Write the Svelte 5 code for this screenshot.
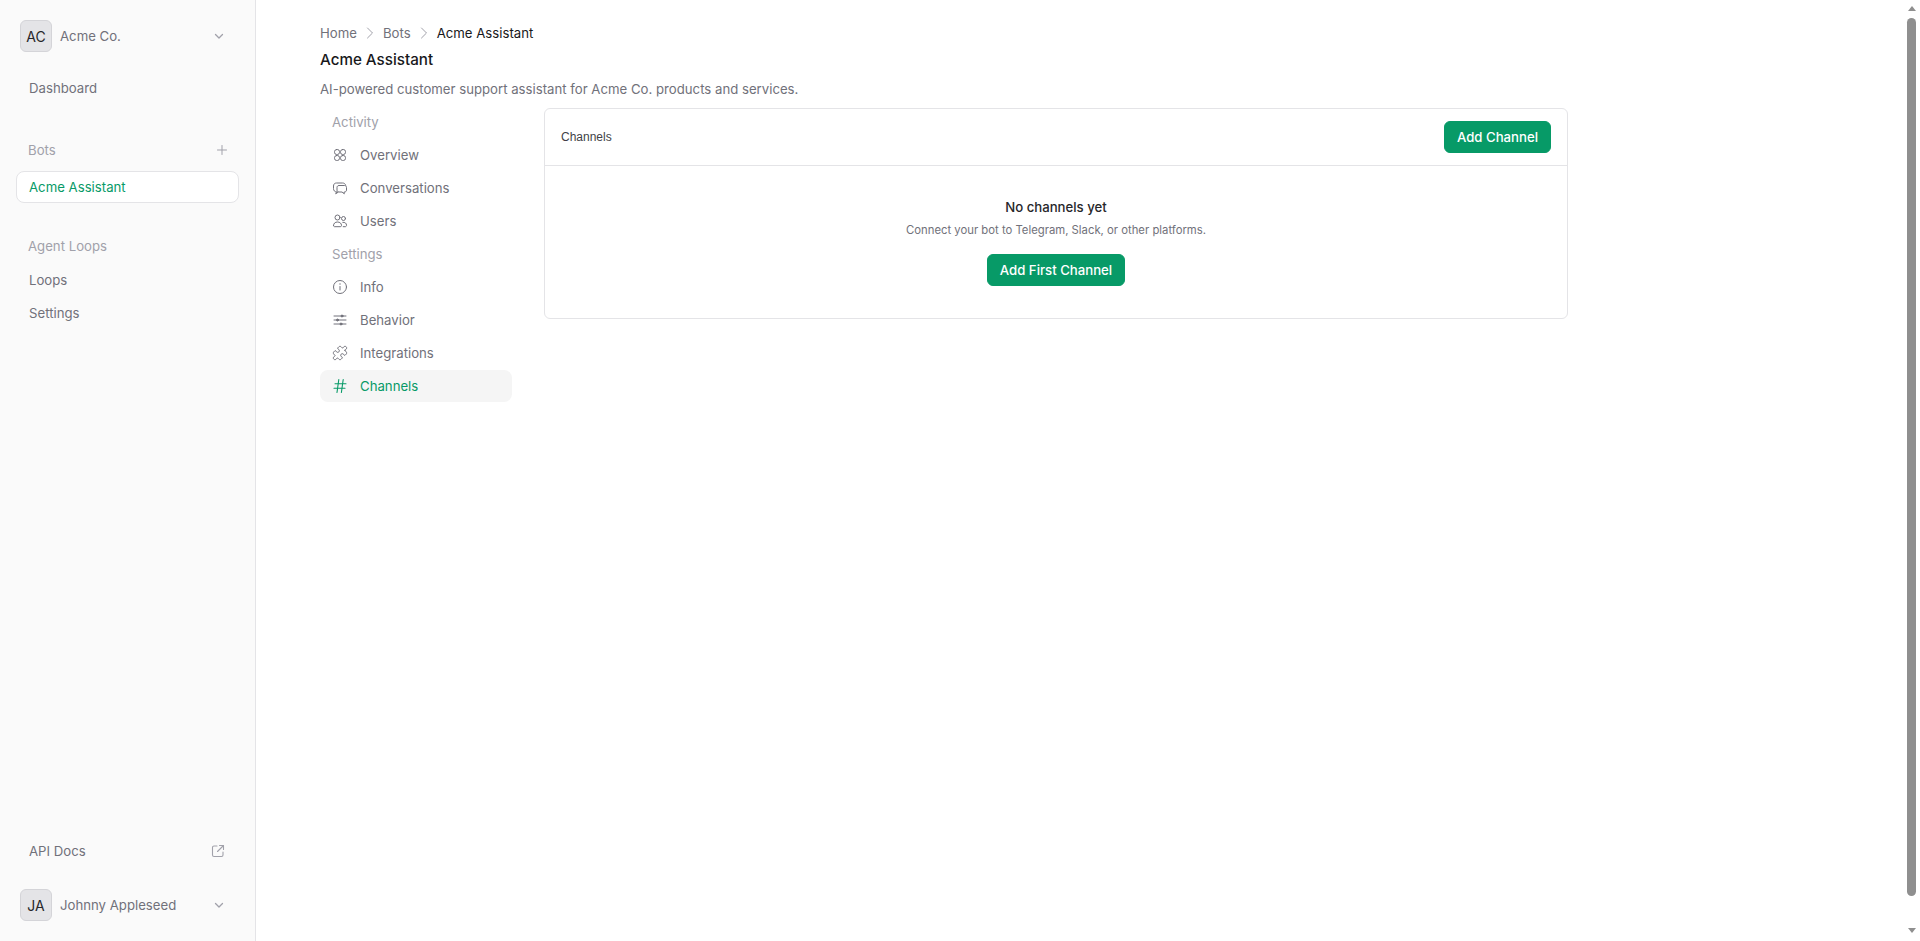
<script lang="ts">
  const activity = [
    { label: 'Overview', icon: 'overview' },
    { label: 'Conversations', icon: 'conversations' },
    { label: 'Users', icon: 'users' }
  ];
  const settings = [
    { label: 'Info', icon: 'info' },
    { label: 'Behavior', icon: 'behavior' },
    { label: 'Integrations', icon: 'integrations' },
    { label: 'Channels', icon: 'channels', active: true }
  ];
</script>

{#snippet chevron()}
  <svg class="chev" viewBox="0 0 16 16" width="16" height="16" fill="none" stroke="currentColor" stroke-width="1.3" stroke-linecap="round" stroke-linejoin="round"><path d="M4.5 6.5 8 10l3.5-3.5" /></svg>
{/snippet}

{#snippet crumbSep()}
  <svg viewBox="0 0 16 16" width="16" height="16" fill="none" stroke="currentColor" stroke-width="1" stroke-linecap="round" stroke-linejoin="round"><path d="m5.5 3 5 5-5 5" /></svg>
{/snippet}

{#snippet navIcon(name)}
  {#if name === 'integrations'}
    <svg viewBox="0 0 24 24" width="16" height="16" fill="none" stroke="currentColor" stroke-width="1.5" stroke-linecap="round" stroke-linejoin="round">
      <path d="M19.439 7.85c-.049.322.059.648.289.878l1.568 1.568c.47.47.706 1.087.706 1.704s-.235 1.233-.706 1.704l-1.611 1.611a.98.98 0 0 1-.837.276c-.47-.07-.802-.48-.968-.925a2.501 2.501 0 1 0-3.214 3.214c.446.166.855.497.925.968a.979.979 0 0 1-.276.837l-1.61 1.61a2.404 2.404 0 0 1-1.705.707 2.402 2.402 0 0 1-1.704-.706l-1.568-1.568a1.026 1.026 0 0 0-.877-.29c-.493.074-.84.504-1.02.968a2.5 2.5 0 1 1-3.237-3.237c.464-.18.894-.527.967-1.02a1.026 1.026 0 0 0-.289-.877l-1.568-1.568A2.402 2.402 0 0 1 1.998 12c0-.617.236-1.234.706-1.704L4.23 8.77c.24-.24.581-.353.917-.303.515.077.877.528 1.073 1.01a2.5 2.5 0 1 0 3.259-3.259c-.482-.196-.933-.558-1.01-1.073-.05-.336.062-.676.303-.917l1.525-1.525A2.402 2.402 0 0 1 12 1.998c.617 0 1.234.236 1.704.706l1.568 1.568c.23.23.556.338.877.29.493-.074.84-.504 1.02-.968a2.5 2.5 0 1 1 3.237 3.237c-.464.18-.894.527-.967 1.02Z" />
    </svg>
  {:else}
    <svg viewBox="0 0 16 16" width="16" height="16" fill="none" stroke="currentColor" stroke-width="1" stroke-linecap="round" stroke-linejoin="round">
      {#if name === 'overview'}
        <rect x="2.5" y="2.5" width="5" height="5" rx="2.2" /><rect x="8.5" y="2.5" width="5" height="5" rx="2.2" /><rect x="2.5" y="8.5" width="5" height="5" rx="2.2" /><rect x="8.5" y="8.5" width="5" height="5" rx="2.2" />
      {:else if name === 'conversations'}
        <path d="M4.5 12c-2-.3-3-1.5-3-3.500V6c0-2 1.300-3 3-3h6c1.700 0 2.800.8 3.200 2.200" />
        <path d="M4.500 12l-.8 1.800 2.300-1.500" />
        <path d="M7 5.500h5.500c1.200 0 2 .8 2 2v2.500c0 1.200-.8 2-2 2h-.5l.3 1.800-2.300-1.800H7c-1.200 0-2-.8-2-2V7.500c0-1.200.8-2 2-2Z" />
      {:else if name === 'users'}
        <circle cx="5.500" cy="4.500" r="2.500" /><circle cx="11.500" cy="5.500" r="2" />
        <path d="M1.500 12.500c0-2.200 1.700-3.500 4-3.500s4 1.300 4 3.500c0 .7-.5 1.200-1.200 1.200H2.700c-.7 0-1.200-.5-1.200-1.200Z" />
        <path d="M10.800 9.300c2.200-.2 3.700 1 3.700 2.900 0 .9-.5 1.500-1.300 1.500h-2" />
      {:else if name === 'info'}
        <circle cx="8" cy="8" r="6.500" /><path d="M8 7.500v3.500" /><path d="M8 5h.01" stroke-width="1.400" />
      {:else if name === 'behavior'}
        <path d="M2 4h12M2 8h12M2 12h12" /><circle cx="10" cy="4" r="1" fill="currentColor" /><circle cx="5.500" cy="8" r="1" fill="currentColor" /><circle cx="9" cy="12" r="1" fill="currentColor" />
      {:else if name === 'channels'}
        <path d="M3 5.800h11M2 10.300h11M6.800 1.500 5 14.500M11.200 1.500 9.400 14.500" stroke-width="1.100" />
      {/if}
    </svg>
  {/if}
{/snippet}

<div class="page">
  <aside class="sidebar">
    <div class="account">
      <span class="avatar">AC</span>
      <span class="account-name">Acme Co.</span>
      {@render chevron()}
    </div>

    <a class="side-link first">Dashboard</a>

    <div class="side-head bots">
      <span>Bots</span>
      <svg viewBox="0 0 16 16" width="16" height="16" fill="none" stroke="currentColor" stroke-width="1" stroke-linecap="round"><path d="M8 3.500v9M3.500 8h9" /></svg>
    </div>
    <a class="side-link current">Acme Assistant</a>

    <div class="side-head loops">Agent Loops</div>
    <a class="side-link">Loops</a>
    <a class="side-link">Settings</a>

    <div class="side-bottom">
      <a class="side-link docs">
        API Docs
        <svg viewBox="0 0 16 16" width="16" height="16" fill="none" stroke="currentColor" stroke-width="1.100" stroke-linecap="round" stroke-linejoin="round"><path d="M7 3H4a1.500 1.500 0 0 0-1.500 1.500v7.500A1.500 1.500 0 0 0 4 13.500h7.500A1.500 1.500 0 0 0 13 12V9" /><path d="M9.500 2.500h4v4M13.500 2.500 7.500 8.500" /></svg>
      </a>
      <div class="account">
        <span class="avatar">JA</span>
        <span class="account-name">Johnny Appleseed</span>
        {@render chevron()}
      </div>
    </div>
  </aside>

  <main class="main">
    <nav class="crumbs">
      <span>Home</span>
      {@render crumbSep()}
      <span>Bots</span>
      {@render crumbSep()}
      <span class="crumb-current">Acme Assistant</span>
    </nav>
    <h1>Acme Assistant</h1>
    <p class="lead">AI-powered customer support assistant for Acme Co. products and services.</p>

    <div class="columns">
      <nav class="subnav">
        <div class="sub-head">Activity</div>
        {#each activity as item}
          <a class="sub-item">{@render navIcon(item.icon)}{item.label}</a>
        {/each}
        <div class="sub-head">Settings</div>
        {#each settings as item}
          <a class="sub-item" class:active={item.active}>{@render navIcon(item.icon)}{item.label}</a>
        {/each}
      </nav>

      <section class="card">
        <header class="card-head">
          <h2>Channels</h2>
          <button type="button" class="primary">Add Channel</button>
        </header>
        <div class="empty">
          <h3>No channels yet</h3>
          <p>Connect your bot to Telegram, Slack, or other platforms.</p>
          <button type="button" class="primary">Add First Channel</button>
        </div>
      </section>
    </div>
  </main>

  <div class="scrollbar" aria-hidden="true">
    <span class="arrow up"></span>
    <span class="thumb"></span>
    <span class="arrow down"></span>
  </div>
</div>

<style>
  :global(body) {
    margin: 0;
    background: #fff;
    overflow: hidden;
  }
  .page {
    display: flex;
    height: 941px;
    font-family: Inter, "Liberation Sans", sans-serif;
    font-size: 13.2px;
    color: #18181b;
  }

  /* sidebar */
  .sidebar {
    width: 256px;
    box-sizing: border-box;
    flex: none;
    display: flex;
    flex-direction: column;
    padding: 20px 16px;
    background: #fafafa;
    border-right: 1px solid #e4e4e7;
  }
  .account {
    display: flex;
    align-items: center;
    gap: 8px;
    height: 32px;
    padding: 0 4px;
    color: #71717a;
  }
  .account-name { flex: 1; }
  .avatar {
    width: 32px;
    height: 32px;
    box-sizing: border-box;
    display: flex;
    align-items: center;
    justify-content: center;
    border: 1px solid #d4d4d8;
    border-radius: 6px;
    background: #e4e4e7;
    color: #27272a;
    font-size: 14px;
  }
  .chev { color: #a1a1aa; margin-right: 8px; }
  .side-link {
    display: flex;
    align-items: center;
    justify-content: space-between;
    height: 32px;
    padding: 0 13px;
    color: #71717a;
    margin-bottom: 1px;
  }
  .side-link.first { margin-top: 20px; }
  .side-link.current {
    box-sizing: border-box;
    border: 1px solid #e4e4e7;
    border-radius: 8px;
    background: #fff;
    color: #079a67;
    padding: 0 12px;
  }
  .side-head {
    display: flex;
    align-items: center;
    justify-content: space-between;
    height: 32px;
    padding: 0 9px 0 12px;
    color: #a1a1aa;
  }
  .bots { margin-top: 29px; margin-bottom: 5px; }
  .loops { margin-top: 26px; margin-bottom: 2px; }
  .side-bottom { margin-top: auto; }
  .docs { margin-bottom: 22px; }
  .docs svg { color: #a1a1aa; }

  /* main */
  .main {
    flex: 1;
    min-width: 0;
    padding: 24px 0 0 64px;
    box-sizing: border-box;
  }
  .crumbs {
    display: flex;
    align-items: center;
    gap: 5px;
    height: 18px;
    color: #71717a;
  }
  .crumbs svg { color: #a1a1aa; }
  .crumb-current { color: #18181b; }
  h1 {
    margin: 6px 0 0;
    font-size: 15.2px;
    line-height: 24px;
    font-weight: 500;
  }
  .lead {
    margin: 7px 0 0;
    line-height: 20px;
    color: #71717a;
  }
  .columns {
    display: flex;
    gap: 32px;
    margin-top: 7px;
    width: 1248px;
    align-items: flex-start;
  }
  .subnav {
    width: 192px;
    flex: none;
    display: flex;
    flex-direction: column;
    gap: 1px;
  }
  .sub-head {
    height: 32px;
    display: flex;
    align-items: center;
    padding: 0 12px;
    color: #a1a1aa;
  }
  .sub-item {
    display: flex;
    align-items: center;
    gap: 12px;
    height: 32px;
    padding: 0 12px;
    border-radius: 8px;
    color: #71717a;
  }
  .sub-item.active {
    background: #f5f5f5;
    color: #079a67;
  }
  .card {
    flex: 1;
    min-width: 0;
    margin-top: 2px;
    border: 1px solid #e4e4e7;
    border-radius: 6px;
    background: #fff;
  }
  .card-head {
    display: flex;
    align-items: center;
    justify-content: space-between;
    height: 56px;
    padding: 0 16px;
    border-bottom: 1px solid #e4e4e7;
  }
  h2 {
    margin: 0;
    font-size: 12px;
    font-weight: 400;
    color: #3f3f46;
    font-family: "Liberation Sans", sans-serif;
  }
  .primary {
    height: 32px;
    padding: 0 12px 1px;
    border: 1px solid #079a67;
    border-radius: 6px;
    background: #079a67;
    color: #fff;
    font: 500 13.2px Inter, "Liberation Sans", sans-serif;
  }
  .empty {
    display: flex;
    flex-direction: column;
    align-items: center;
    padding: 31px 0 32px;
  }
  h3 {
    margin: 0;
    font-size: 13.2px;
    line-height: 20px;
    font-weight: 500;
    color: #27272a;
  }
  .empty p {
    margin: 4px 0 15px;
    font-size: 11.3px;
    line-height: 18px;
    color: #71717a;
  }

  /* classic scrollbar, painted */
  .scrollbar {
    width: 17px;
    flex: none;
    display: flex;
    flex-direction: column;
    align-items: center;
    background: #fff;
    padding: 6px 0 8px;
    box-sizing: border-box;
  }
  .thumb {
    flex: 1;
    width: 9px;
    margin: 7px 0 32px;
    border-radius: 5px;
    background: #8f8f8f;
  }
  .arrow {
    width: 0;
    height: 0;
    border-left: 4px solid transparent;
    border-right: 4px solid transparent;
  }
  .arrow.up { border-bottom: 5px solid #8f8f8f; }
  .arrow.down { border-top: 5px solid #8f8f8f; }
</style>
